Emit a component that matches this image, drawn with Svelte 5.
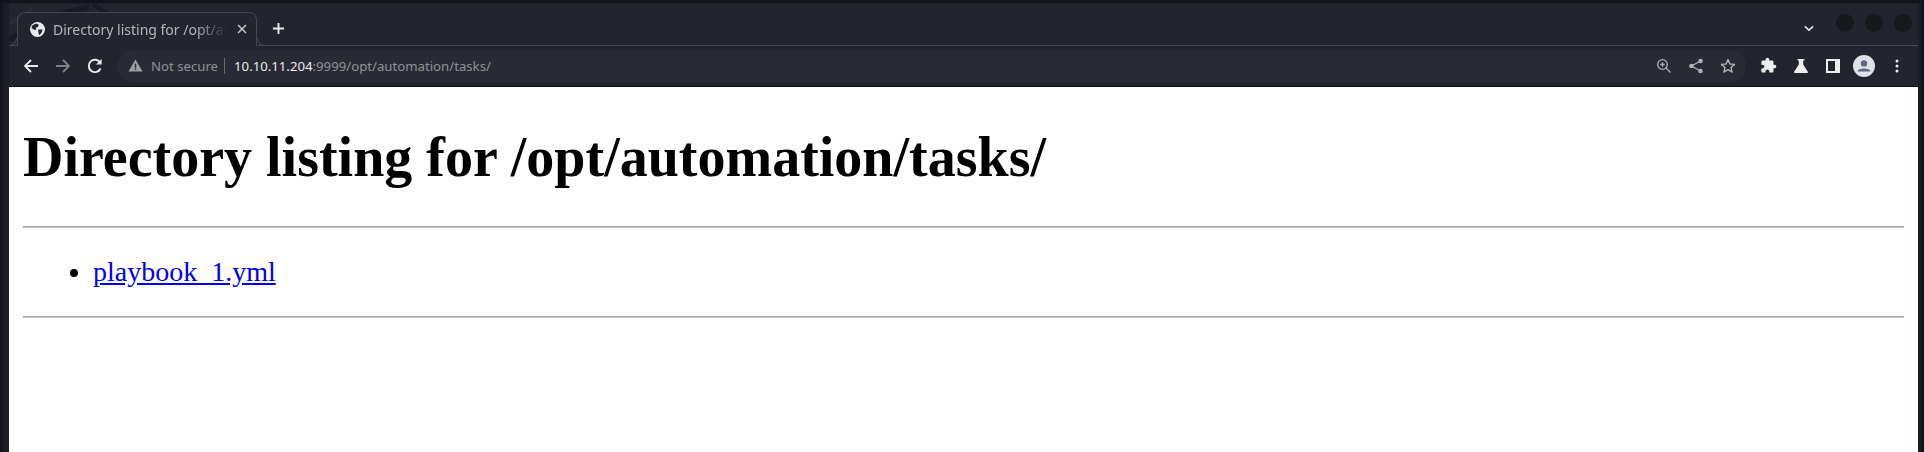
<script>
	const title = '/opt/automation/tasks/';
	const files = ['playbook_1.yml'];
</script>

<div class="window">
	<div class="frame">
		<div class="tabstrip">
			<!-- faint strokes of the browser theme image -->
			<svg class="theme" viewBox="0 0 120 41" width="120" height="41">
				<path d="M0 36 L42 12 L80 3" fill="none" stroke="#191b22" stroke-width="5" />
				<path d="M84 0 L104 14" fill="none" stroke="#191b22" stroke-width="4" />
				<path d="M0 20 L24 4" fill="none" stroke="#2a2d36" stroke-width="3" />
			</svg>
			<div class="tab">
				<svg class="favicon" viewBox="0 0 16 16" width="15" height="15">
					<circle cx="8" cy="8" r="8" fill="#e8eaed" />
					<path d="M2.6 3.4 L6.6 1.6 L9.4 2.8 L8.4 5.2 L6.2 6.2 L6.8 8 L4.8 8.4 L1.6 6.4 Z M9 8 L13.4 8 L12.6 11 L10 14 L8.8 11 Z" fill="#22252e" />
				</svg>
				<span class="tab-title">Directory listing for {title}</span>
				<svg class="close" viewBox="0 0 10 10" width="10" height="10">
					<path d="M1 1 L9 9 M9 1 L1 9" stroke="#c4c7cc" stroke-width="1.5" />
				</svg>
			</div>
			<svg class="newtab" viewBox="0 0 14 14" width="13" height="13">
				<path d="M7 1 V13 M1 7 H13" stroke="#e8eaed" stroke-width="2" />
			</svg>
			<div class="spacer"></div>
			<svg class="chev" viewBox="0 0 12 8" width="10" height="7">
				<path d="M1 1.5 L6 6 L11 1.5" fill="none" stroke="#e8eaed" stroke-width="1.8" />
			</svg>
			<div class="dots">
				<span></span>
				<span></span>
				<span></span>
			</div>
		</div>

		<div class="toolbar">
			<svg class="nav" viewBox="0 0 16 16" width="16" height="16">
				<path d="M15 8 H2 M8 2 L2 8 L8 14" fill="none" stroke="#e8eaed" stroke-width="1.8" />
			</svg>
			<svg class="nav" viewBox="0 0 16 16" width="16" height="16">
				<path d="M1 8 H14 M8 2 L14 8 L8 14" fill="none" stroke="#7f8388" stroke-width="1.8" />
			</svg>
			<svg class="nav" viewBox="0 0 16 16" width="16" height="16">
				<path d="M13.6 10.5 A6.2 6.2 0 1 1 13.2 4.6" fill="none" stroke="#e8eaed" stroke-width="1.9" />
				<path d="M14.6 1 V6.6 H9 Z" fill="#e8eaed" />
			</svg>

			<div class="omnibox">
				<svg class="warn" viewBox="0 0 16 14" width="15" height="13">
					<path d="M8 0.5 L15.6 13.5 H0.4 Z" fill="#9aa0a6" />
					<rect x="7.2" y="5" width="1.6" height="4.4" fill="#282b33" />
					<rect x="7.2" y="10.2" width="1.6" height="1.6" fill="#282b33" />
				</svg>
				<span class="secure">Not secure</span>
				<span class="sep"></span>
				<span class="url"><span class="host">10.10.11.204</span>:9999{title}</span>
				<div class="spacer"></div>
				<svg class="omni-icon" viewBox="0 0 16 16" width="16" height="16">
					<circle cx="6.5" cy="6.5" r="4.8" fill="none" stroke="#aeb1b6" stroke-width="1.3" />
					<path d="M10 10 L14.5 14.5 M6.5 4.3 V8.7 M4.3 6.5 H8.7" stroke="#aeb1b6" stroke-width="1.3" />
				</svg>
				<svg class="omni-icon" viewBox="0 0 16 16" width="16" height="16">
					<path d="M12.5 3 L3.5 8 L12.5 13" fill="none" stroke="#aeb1b6" stroke-width="1.3" />
					<circle cx="12.5" cy="3" r="2.3" fill="#aeb1b6" />
					<circle cx="3.5" cy="8" r="2.3" fill="#aeb1b6" />
					<circle cx="12.5" cy="13" r="2.3" fill="#aeb1b6" />
				</svg>
				<svg class="omni-icon" viewBox="0 0 16 16" width="16" height="16">
					<path d="M8 1.6 L9.9 6 L14.6 6.4 L11 9.5 L12.1 14.1 L8 11.7 L3.9 14.1 L5 9.5 L1.4 6.4 L6.1 6 Z" fill="none" stroke="#aeb1b6" stroke-width="1.4" stroke-linejoin="round" />
				</svg>
			</div>

			<svg class="tool" viewBox="0 0 24 24" width="17" height="17">
				<path d="M20.5 11H19V7c0-1.1-.9-2-2-2h-4V3.5C13 2.12 11.88 1 10.5 1S8 2.12 8 3.5V5H4c-1.1 0-1.99.9-1.99 2v3.8H3.5c1.49 0 2.7 1.21 2.7 2.7s-1.21 2.7-2.7 2.7H2V20c0 1.1.9 2 2 2h3.8v-1.5c0-1.49 1.21-2.7 2.7-2.7 1.49 0 2.7 1.21 2.7 2.7V22H17c1.1 0 2-.9 2-2v-4h1.5c1.38 0 2.5-1.12 2.5-2.5S21.88 11 20.5 11z" fill="#eeeeee" />
			</svg>
			<svg class="tool" viewBox="0 0 16 16" width="16" height="16">
				<path d="M4.6 1 H11.4 V2.6 H10.2 V6.6 L15 14 A1 1 0 0 1 14.2 15 H1.8 A1 1 0 0 1 1 14 L5.8 6.6 V2.6 H4.6 Z" fill="#eeeeee" />
			</svg>
			<svg class="tool panel" viewBox="0 0 14 14" width="14" height="14">
				<path fill-rule="evenodd" d="M0 0 H14 V14 H0 Z M2 2 V12 H9 V2 Z" fill="#eeeeee" />
			</svg>
			<svg class="avatar" viewBox="0 0 22 22" width="22" height="22">
				<circle cx="11" cy="11" r="11" fill="#dee1e6" />
				<circle cx="11" cy="8.4" r="3.2" fill="#5f6a80" />
				<path d="M4.8 15.6 C6 12.8 16 12.8 17.2 15.6 V16.4 H4.8 Z" fill="#5f6a80" />
			</svg>
			<svg class="menu" viewBox="0 0 4 14" width="4" height="14">
				<circle cx="2" cy="2" r="1.5" fill="#e8eaed" />
				<circle cx="2" cy="7" r="1.5" fill="#e8eaed" />
				<circle cx="2" cy="12" r="1.5" fill="#e8eaed" />
			</svg>
		</div>

		<main class="page">
			<h1>Directory listing for {title}</h1>
			<hr />
			<ul>
				{#each files as file}
					<li><a href={file} onclick={(e) => e.preventDefault()}>{file}</a></li>
				{/each}
			</ul>
			<hr />
		</main>
	</div>
</div>

<style>
	:global(body) {
		background: #12141a;
	}

	.window {
		height: 452px;
		box-sizing: border-box;
		padding: 3px 3px 0 3px;
		background: #12141a;
		display: flex;
		overflow: hidden;
	}

	.frame {
		flex: 1;
		min-width: 0;
		box-sizing: border-box;
		padding: 1px 3px 0 6px;
		background: #1c1e26;
		display: flex;
		flex-direction: column;
	}

	.tabstrip {
		height: 42px;
		flex: none;
		display: flex;
		align-items: flex-end;
		background: #22252e;
		border-bottom: 1px solid #45484f;
		box-sizing: border-box;
		position: relative;
	}

	.theme {
		position: absolute;
		left: 0;
		top: 0;
	}

	.tab {
		position: relative;
		width: 240px;
		height: 34px;
		margin-left: 8px;
		margin-bottom: -1px;
		box-sizing: border-box;
		display: flex;
		align-items: center;
		gap: 8px;
		padding: 0 9px 0 12px;
		background: #22252e;
		border: 1px solid #45484f;
		border-bottom: 1px solid #22252e;
		border-radius: 8px 8px 0 0;
		font: 14px "Noto Sans", sans-serif;
		color: #b3b6bb;
	}

	.tab::before, .tab::after {
		content: '';
		position: absolute;
		bottom: -1px;
		width: 8px;
		height: 8px;
		box-sizing: border-box;
		border-bottom: 1px solid #45484f;
	}

	.tab::before {
		left: -9px;
		border-right: 1px solid #45484f;
		border-radius: 0 0 8px 0;
	}

	.tab::after {
		right: -9px;
		border-left: 1px solid #45484f;
		border-radius: 0 0 0 8px;
	}

	.tab-title {
		flex: 1;
		white-space: nowrap;
		overflow: hidden;
		-webkit-mask-image: linear-gradient(to right, #000 82%, transparent);
		mask-image: linear-gradient(to right, #000 82%, transparent);
	}

	.favicon, .newtab, .chev {
		flex: none;
	}

	.close {
		flex: none;
		margin-left: 2px;
	}

	.newtab {
		margin: 0 0 10px 15px;
		position: relative;
	}

	.spacer {
		flex: 1;
	}

	.chev {
		margin-bottom: 13px;
		margin-right: 22px;
	}

	.dots {
		display: flex;
		gap: 11px;
		margin-right: 6px;
		margin-bottom: 13px;
	}

	.dots span {
		width: 18px;
		height: 18px;
		border-radius: 50%;
		background: #16181c;
	}

	.toolbar {
		height: 41px;
		flex: none;
		box-sizing: border-box;
		display: flex;
		align-items: center;
		padding: 0 19px 1px 14px;
		background: #22252e;
		border-bottom: 1px solid #0d0e11;
	}

	.nav {
		flex: none;
		margin-right: 16px;
	}

	.omnibox {
		flex: 1;
		height: 32px;
		margin: 0 -2px;
		display: flex;
		align-items: center;
		padding: 0 10px 0 11px;
		background: #282b33;
		border-radius: 16px;
		font: 13.2px "Noto Sans", sans-serif;
	}

	.warn {
		margin-right: 8px;
	}

	.secure {
		color: #8e9299;
	}

	.sep {
		width: 1px;
		height: 16px;
		margin: 0 9px 0 6px;
		background: #6b6e74;
	}

	.url {
		color: #8e9299;
	}

	.host {
		color: #e8eaed;
	}

	.omni-icon {
		margin-left: 16px;
	}

	.tool {
		margin-left: 16px;
	}

	.panel {
		margin-left: 17px;
	}

	.avatar {
		margin-left: 13px;
	}

	.menu {
		margin-left: 20px;
	}

	.page {
		flex: 1;
		background: #fff;
		padding: 0 14px;
		color: #000;
		font: 28px "Liberation Serif", serif;
	}

	h1 {
		font-size: 56px;
		font-weight: bold;
		margin: 37.5px 0;
	}

	hr {
		margin: 14px 0;
		border: 0;
		border-top: 1px solid #a6a6a6;
		border-bottom: 1px solid #c4c4c4;
		height: 0;
	}

	ul {
		margin: 28px 0;
		padding-left: 70px;
	}

	a {
		color: #00e;
		text-decoration: underline;
	}
</style>
